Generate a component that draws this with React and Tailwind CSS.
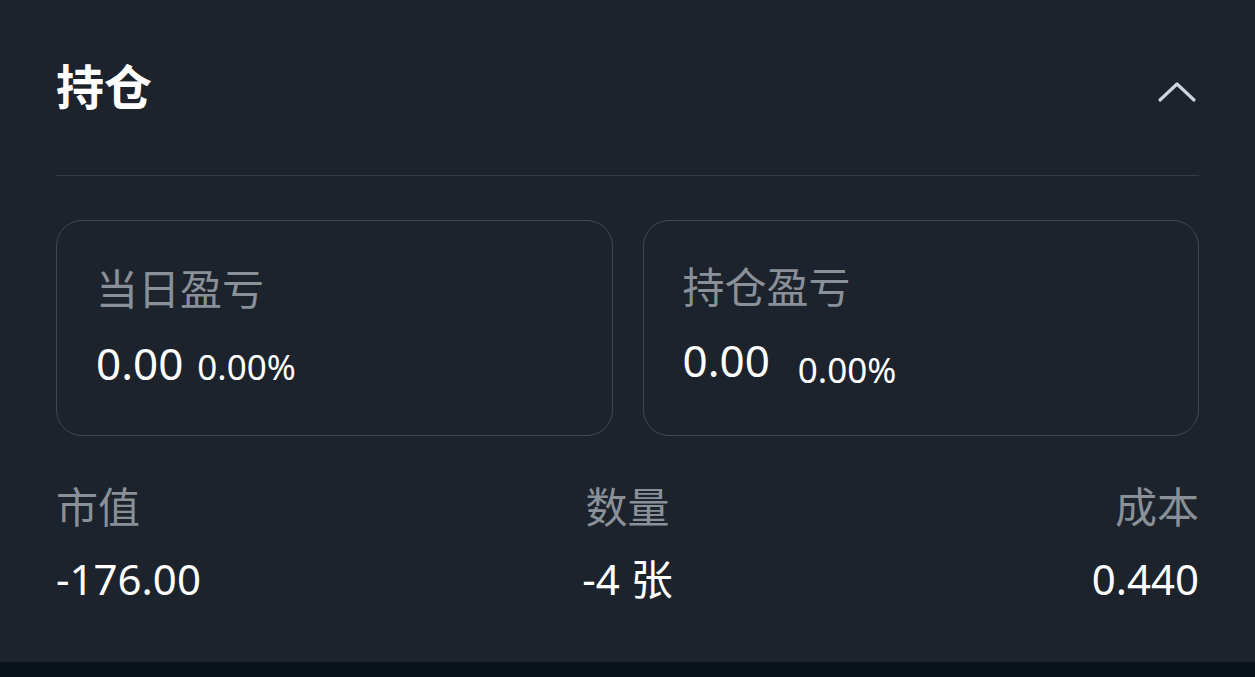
import React from "react";

const font = { fontFamily: '"Noto Sans", "Noto Sans CJK SC", sans-serif' };

function PnlCard({ label, labelClass, value, valueClass, pct, pctClass }) {
    return (
        <div className="flex-1 h-[216px] rounded-[26px] border border-[#3f4752] pl-[39px] pt-[40px]">
            <div className={"text-[42px] leading-[56px] text-[#8a9098] " + labelClass}>{label}</div>
            <div className="flex items-baseline mt-[20px] text-white">
                <span className={"text-[44px] leading-[52px] relative " + valueClass}>{value}</span>
                <span className={"text-[35px] leading-[40px] relative " + pctClass}>{pct}</span>
            </div>
        </div>
    );
}

export default function App() {
    return (
        <div className="w-[1255px] h-[677px] bg-[#1c232c] flex flex-col" style={font}>
            <div className="flex-1 px-[56px]">
                <div className="h-[176px] flex items-center justify-between border-b border-[#343c46] pb-[2px]">
                    <h1 className="text-[48px] font-bold text-white leading-none">持仓</h1>
                    <svg width="40" height="24" viewBox="0 0 40 24" className="mr-[2px] relative top-[4px]">
                        <path d="M3 21 L20 5 L37 21" fill="none" stroke="#d0d4d8" strokeWidth="3.2" strokeLinecap="round" strokeLinejoin="round" />
                    </svg>
                </div>

                <div className="flex gap-[30px] mt-[44px]">
                    <PnlCard label="当日盈亏" labelClass="" value="0.00" valueClass="" pct="0.00%" pctClass="ml-[14px]" />
                    <PnlCard label="持仓盈亏" labelClass="relative top-[-2px]" value="0.00" valueClass="top-[-3px]" pct="0.00%" pctClass="ml-[28px] top-[3px]" />
                </div>

                <div className="grid grid-cols-[1fr_auto_1fr] mt-[43px]">
                    <div className="flex flex-col items-start">
                        <span className="text-[42px] leading-[56px] text-[#8a9098]">市值</span>
                        <span className="text-[42px] leading-[56px] text-white mt-[16px]">-176.00</span>
                    </div>
                    <div className="flex flex-col items-center">
                        <span className="text-[42px] leading-[56px] text-[#8a9098]">数量</span>
                        <span className="text-[42px] leading-[56px] text-white mt-[16px]">-4 张</span>
                    </div>
                    <div className="flex flex-col items-end">
                        <span className="text-[42px] leading-[56px] text-[#8a9098]">成本</span>
                        <span className="text-[42px] leading-[56px] text-white mt-[16px]">0.440</span>
                    </div>
                </div>
            </div>
            <div className="h-[15px] bg-[#0a121b]" />
        </div>
    );
}
